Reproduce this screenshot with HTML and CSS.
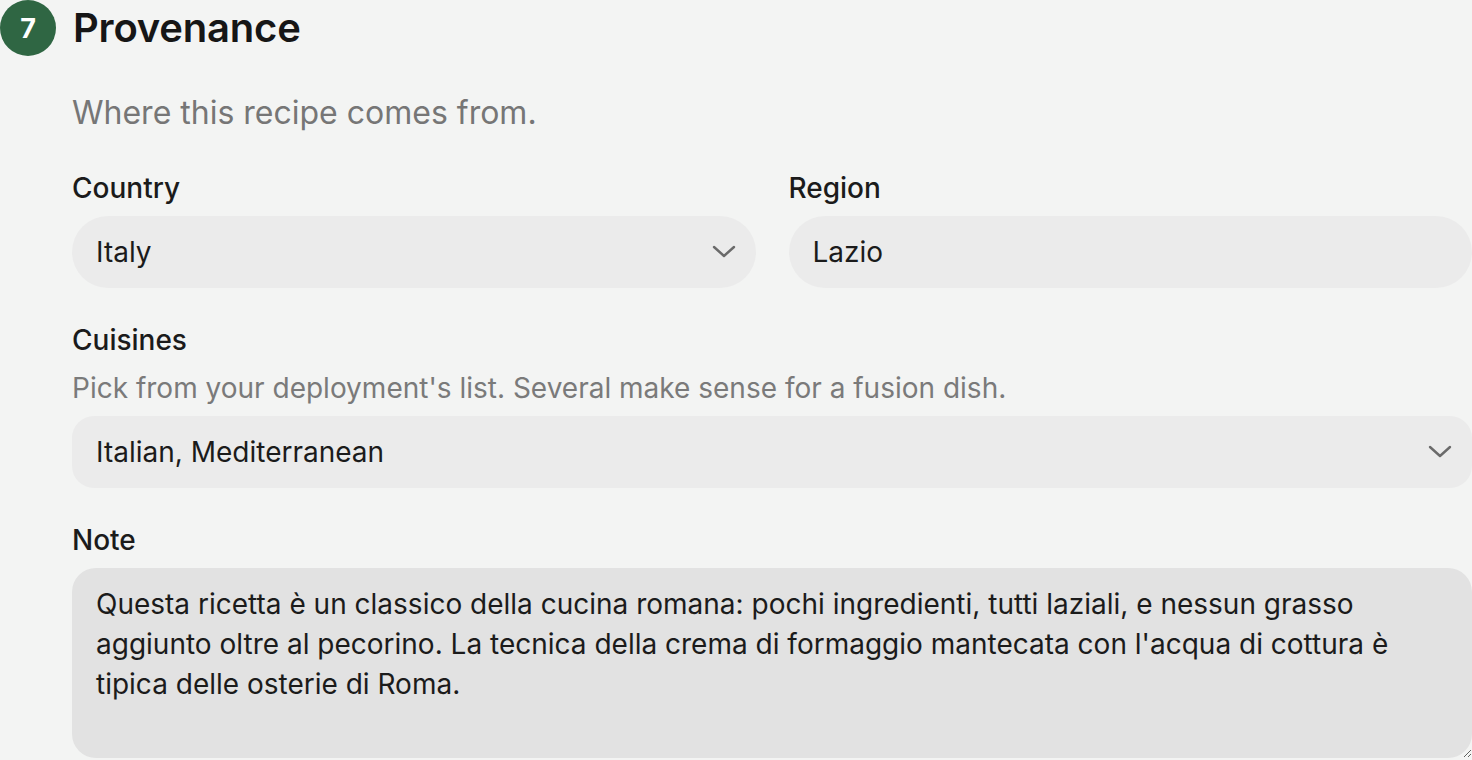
FILE: index.html
```html
<!DOCTYPE html>
<html lang="it">
<head>
<meta charset="utf-8">
<title>Provenance</title>
<link rel="stylesheet" href="styles.css">
</head>
<body>
<section class="step">
  <header class="step-head">
    <span class="badge">7</span>
    <h2 class="title">Provenance</h2>
  </header>
  <div class="step-body">
    <p class="lead">Where this recipe comes from.</p>
    <div class="row">
      <div class="field">
        <label class="label">Country</label>
        <div class="control pill">
          <span class="value">Italy</span>
          <svg class="chev" width="24" height="14" viewBox="0 0 24 14"><path d="M2 2 L12 11 L22 2" fill="none" stroke="#6a6a6a" stroke-width="2.4" stroke-linecap="round" stroke-linejoin="round"/></svg>
        </div>
      </div>
      <div class="field">
        <label class="label">Region</label>
        <div class="control pill">
          <span class="value">Lazio</span>
        </div>
      </div>
    </div>
    <div class="field">
      <label class="label">Cuisines</label>
      <p class="help">Pick from your deployment's list. Several make sense for a fusion dish.</p>
      <div class="control box">
        <span class="value">Italian, Mediterranean</span>
        <svg class="chev" width="24" height="14" viewBox="0 0 24 14"><path d="M2 2 L12 11 L22 2" fill="none" stroke="#6a6a6a" stroke-width="2.4" stroke-linecap="round" stroke-linejoin="round"/></svg>
      </div>
    </div>
    <div class="field">
      <label class="label">Note</label>
      <textarea class="note">Questa ricetta è un classico della cucina romana: pochi ingredienti, tutti laziali, e nessun grasso aggiunto oltre al pecorino. La tecnica della crema di formaggio mantecata con l'acqua di cottura è tipica delle osterie di Roma.</textarea>
    </div>
  </div>
</section>
</body>
</html>
```
FILE: styles.css
```css
* { box-sizing: border-box; }
html, body { margin: 0; padding: 0; }
body {
  background: #f3f4f3;
  font-family: Inter, "Noto Sans", sans-serif;
  color: #1b1b1b;
  width: 1472px;
  overflow: hidden;
}
.step-head {
  display: flex;
  align-items: center;
  gap: 17px;
  height: 56px;
}
.badge {
  width: 56px;
  height: 56px;
  border-radius: 50%;
  background: #2f6643;
  color: #fff;
  font-weight: 700;
  font-size: 27px;
  display: flex;
  align-items: center;
  justify-content: center;
  flex: none;
}
.title {
  margin: 0;
  font-size: 40px;
  font-weight: 600;
  letter-spacing: -0.2px;
  line-height: 56px;
  color: #161616;
}
.step-body {
  padding-left: 72px;
  display: flex;
  flex-direction: column;
  gap: 34px;
}
.lead {
  margin: 37px 0 3px;
  font-size: 32px;
  line-height: 40px;
  color: #767676;
}
.row {
  display: grid;
  grid-template-columns: 1fr 1fr;
  gap: 33px;
}
.field {
  display: flex;
  flex-direction: column;
}
.label {
  font-size: 28px;
  font-weight: 500;
  line-height: 36px;
  margin-bottom: 10px;
  color: #1b1b1b;
}
.help {
  margin: 2px 0 10px;
  font-size: 28px;
  line-height: 36px;
  color: #7a7a7a;
}
.control {
  height: 72px;
  background: #ebebeb;
  display: flex;
  align-items: center;
  justify-content: space-between;
  padding: 0 20px 0 24px;
}
.pill { border-radius: 36px; }
.box { border-radius: 22px; }
.value {
  font-size: 28px;
  color: #1b1b1b;
}
.chev { flex: none; }
.note {
  display: block;
  width: 100%;
  height: 190px;
  background: #e2e2e2;
  border: none;
  border-radius: 24px;
  padding: 16px 24px;
  font-family: Inter, "Noto Sans", sans-serif;
  font-size: 28px;
  line-height: 40px;
  color: #1b1b1b;
  outline: none;
  resize: vertical;
}
```
